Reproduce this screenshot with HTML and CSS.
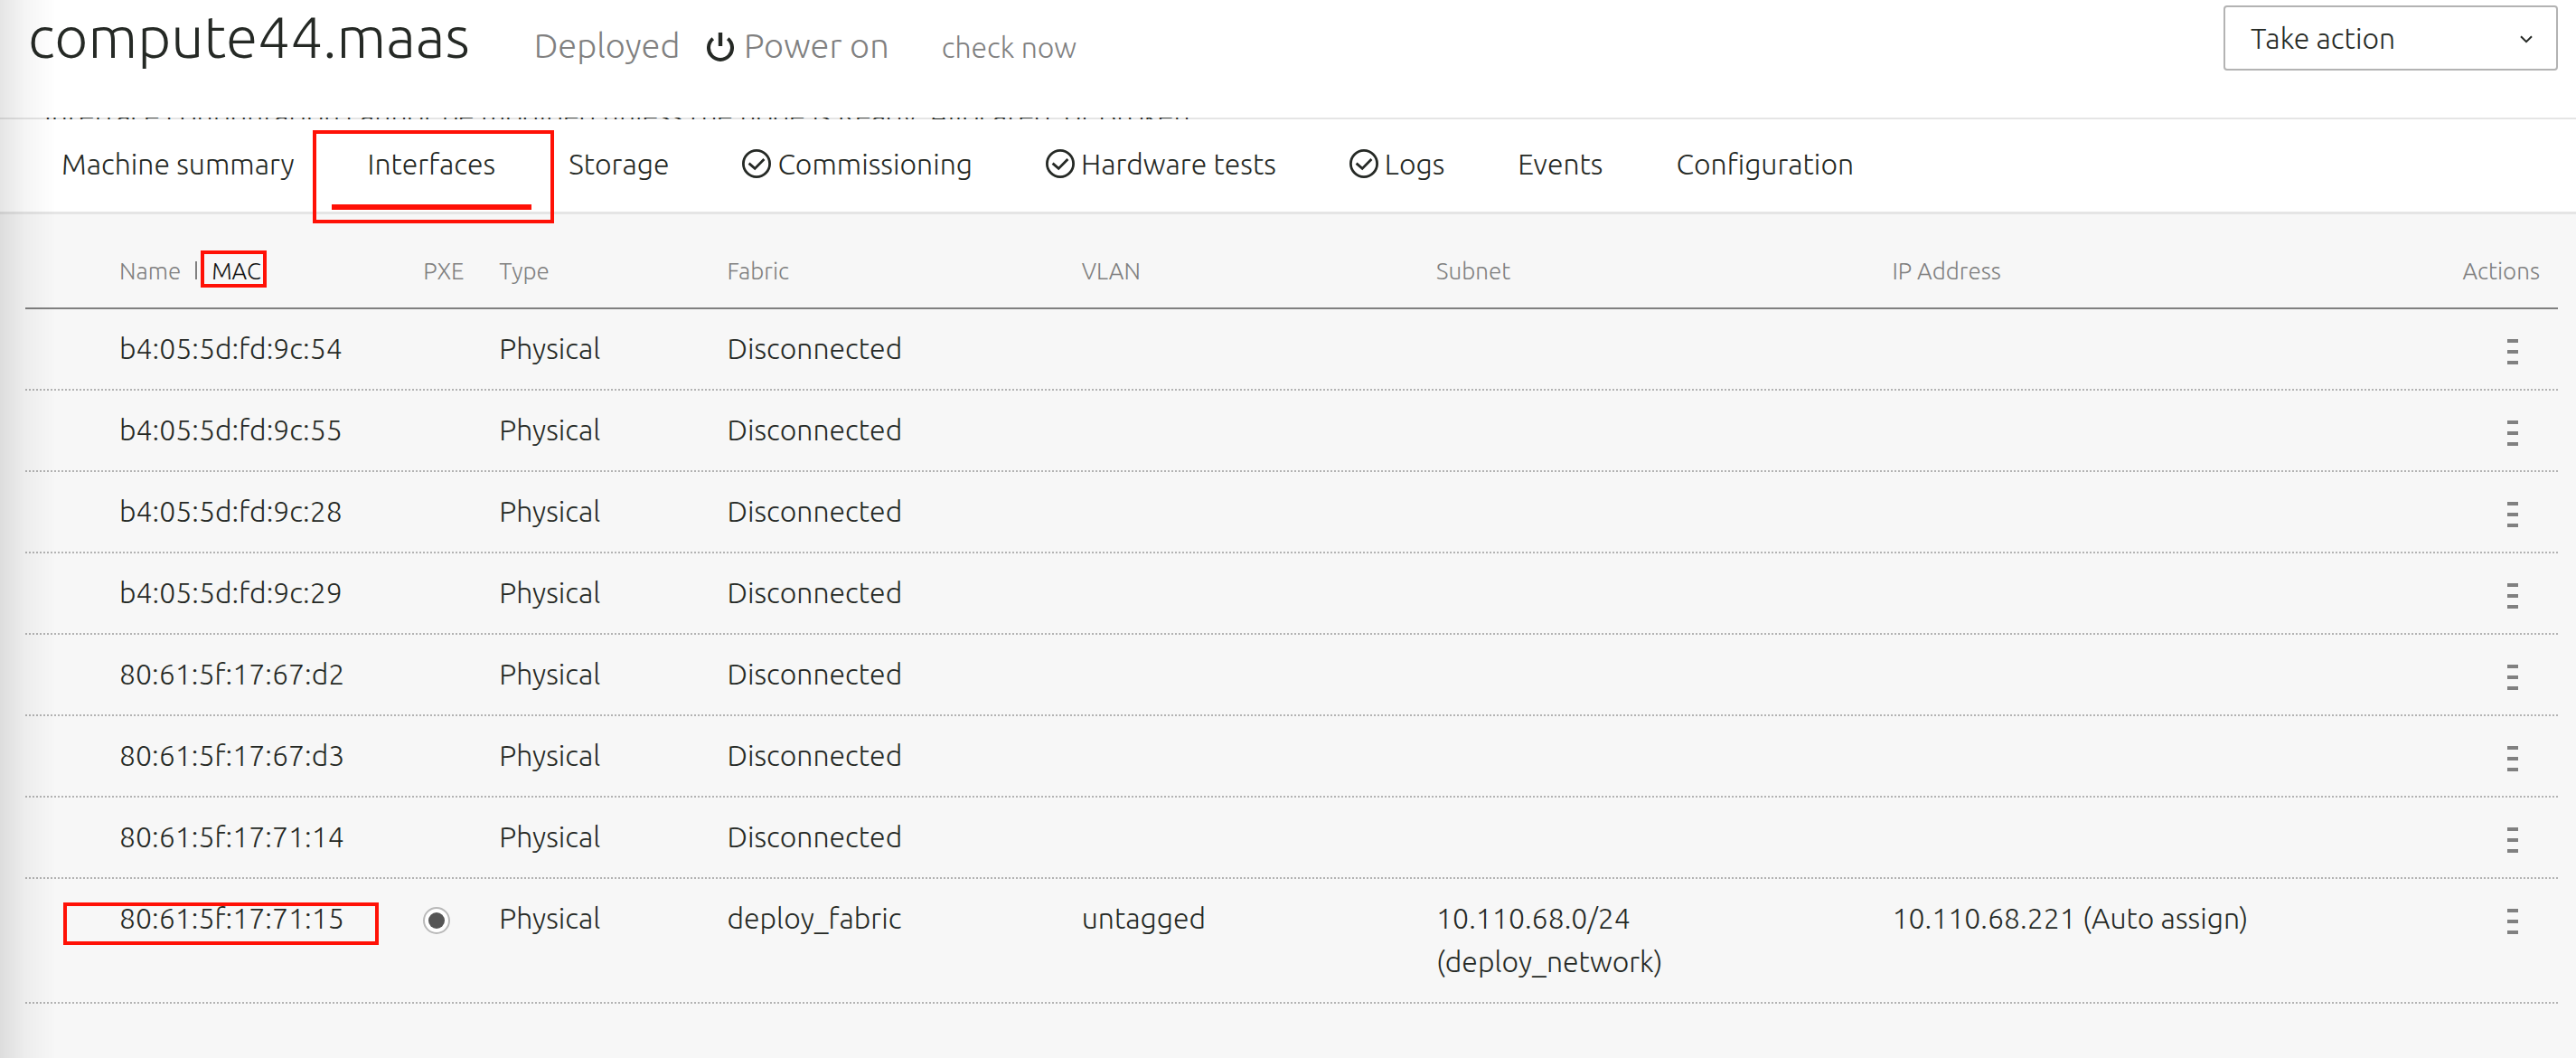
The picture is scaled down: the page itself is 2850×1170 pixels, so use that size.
FILE: index.html
```html
<!DOCTYPE html>
<html lang="en">
<head>
<meta charset="utf-8">
<meta name="viewport" content="width=device-width, initial-scale=1">
<title>compute44.maas | Interfaces</title>
<link rel="stylesheet" href="styles.css">
</head>
<body>
<svg class="sprite" aria-hidden="true">
  <symbol id="icon-success" viewBox="0 0 32 32">
    <circle cx="16" cy="16" r="14.6" fill="none" stroke="currentColor" stroke-width="2.8"/>
    <path d="M7.6 15.6 L14.2 21.4 L24.4 11" fill="none" stroke="currentColor" stroke-width="2.8"/>
  </symbol>
  <symbol id="icon-menu" viewBox="0 0 12 28">
    <path d="M0 0h12v4H0zM0 12h12v4H0zM0 24h12v4H0z" fill="currentColor"/>
  </symbol>
</svg>

<header class="header">
  <h1 class="header-title">compute44.maas</h1>
  <p class="header-status">Deployed</p>
  <p class="header-power">
    <svg class="power-icon" viewBox="0 0 30 32" aria-hidden="true">
      <path d="M6.8 6.8 A13 13 0 1 0 23.2 6.8" fill="none" stroke="currentColor" stroke-width="4"/>
      <path d="M15 0V15" stroke="currentColor" stroke-width="4.4"/>
    </svg>
    Power on
  </p>
  <a class="header-check" href="#check">check now</a>
  <div class="action">
    <select class="action-select" aria-label="Take action">
      <option>Take action</option>
    </select>
    <svg class="action-chevron" viewBox="0 0 14 9" aria-hidden="true">
      <path d="M1 1.2 L7 7.2 L13 1.2" fill="none" stroke="currentColor" stroke-width="2"/>
    </svg>
  </div>
</header>

<div class="notice">
  <p class="notice-text">Interface configuration cannot be modified unless the node is Ready, Allocated, or Broken.</p>
</div>

<nav class="tabs" aria-label="Machine">
  <a class="tab" href="#summary">Machine summary</a>
  <a class="tab tab-selected" href="#interfaces" aria-current="page">Interfaces<span class="mark mark-tab"></span></a>
  <a class="tab" href="#storage">Storage</a>
  <a class="tab" href="#commissioning"><svg class="tab-icon" aria-hidden="true"><use href="#icon-success"/></svg>Commissioning</a>
  <a class="tab" href="#tests"><svg class="tab-icon" aria-hidden="true"><use href="#icon-success"/></svg>Hardware tests</a>
  <a class="tab" href="#logs"><svg class="tab-icon" aria-hidden="true"><use href="#icon-success"/></svg>Logs</a>
  <a class="tab" href="#events">Events</a>
  <a class="tab" href="#configuration">Configuration</a>
</nav>

<main class="content">
  <table class="interfaces">
    <colgroup>
      <col class="col-name"><col class="col-pxe"><col class="col-type"><col class="col-fabric"><col class="col-vlan"><col class="col-subnet"><col class="col-ip"><col class="col-actions">
    </colgroup>
    <thead>
      <tr>
        <th scope="col"><span class="sort"><button class="sort-button" type="button">Name</button><span class="sort-divider"></span><button class="sort-button sort-active" type="button">MAC<span class="mark mark-mac"></span></button></span></th>
        <th scope="col">PXE</th>
        <th scope="col">Type</th>
        <th scope="col">Fabric</th>
        <th scope="col">VLAN</th>
        <th scope="col">Subnet</th>
        <th scope="col">IP Address</th>
        <th scope="col">Actions</th>
      </tr>
    </thead>
    <tbody>
      <tr><td>b4:05:5d:fd:9c:54</td><td></td><td>Physical</td><td>Disconnected</td><td></td><td></td><td></td><td><button class="menu" type="button" aria-label="Actions"><svg class="menu-icon"><use href="#icon-menu"/></svg></button></td></tr>
      <tr><td>b4:05:5d:fd:9c:55</td><td></td><td>Physical</td><td>Disconnected</td><td></td><td></td><td></td><td><button class="menu" type="button" aria-label="Actions"><svg class="menu-icon"><use href="#icon-menu"/></svg></button></td></tr>
      <tr><td>b4:05:5d:fd:9c:28</td><td></td><td>Physical</td><td>Disconnected</td><td></td><td></td><td></td><td><button class="menu" type="button" aria-label="Actions"><svg class="menu-icon"><use href="#icon-menu"/></svg></button></td></tr>
      <tr><td>b4:05:5d:fd:9c:29</td><td></td><td>Physical</td><td>Disconnected</td><td></td><td></td><td></td><td><button class="menu" type="button" aria-label="Actions"><svg class="menu-icon"><use href="#icon-menu"/></svg></button></td></tr>
      <tr><td>80:61:5f:17:67:d2</td><td></td><td>Physical</td><td>Disconnected</td><td></td><td></td><td></td><td><button class="menu" type="button" aria-label="Actions"><svg class="menu-icon"><use href="#icon-menu"/></svg></button></td></tr>
      <tr><td>80:61:5f:17:67:d3</td><td></td><td>Physical</td><td>Disconnected</td><td></td><td></td><td></td><td><button class="menu" type="button" aria-label="Actions"><svg class="menu-icon"><use href="#icon-menu"/></svg></button></td></tr>
      <tr><td>80:61:5f:17:71:14</td><td></td><td>Physical</td><td>Disconnected</td><td></td><td></td><td></td><td><button class="menu" type="button" aria-label="Actions"><svg class="menu-icon"><use href="#icon-menu"/></svg></button></td></tr>
      <tr><td><span class="mac">80:61:5f:17:71:15<span class="mark mark-row"></span></span></td><td><input class="pxe" type="radio" name="pxe" aria-label="PXE boot interface" checked></td><td>Physical</td><td>deploy_fabric</td><td>untagged</td><td>10.110.68.0/24<br>(deploy_network)</td><td>10.110.68.221 (Auto assign)</td><td><button class="menu" type="button" aria-label="Actions"><svg class="menu-icon"><use href="#icon-menu"/></svg></button></td></tr>
    </tbody>
  </table>
</main>
</body>
</html>
```

FILE: styles.css
```css
* {
  box-sizing: border-box;
}

body {
  margin: 0;
  min-height: 100vh;
  background: #f7f7f7;
  color: #252925;
  font-family: Ubuntu, "Open Sans", sans-serif;
  font-size: 32px;
  font-weight: 300;
  line-height: 48px;
}

body::before {
  content: "";
  position: fixed;
  z-index: 1;
  inset: 0 auto 0 0;
  width: 62px;
  background: linear-gradient(to right, rgba(0, 0, 0, 0.1), rgba(0, 0, 0, 0.04) 28px, transparent);
  pointer-events: none;
}

button,
select {
  margin: 0;
  border: 0;
  padding: 0;
  background: none;
  color: inherit;
  font: inherit;
}

a {
  color: inherit;
  text-decoration: none;
}

h1,
p {
  margin: 0;
  font-weight: 300;
}

.sprite {
  display: none;
}

.header {
  display: flex;
  align-items: baseline;
  padding: 0 20px 50px 31px;
  background: #fff;
}

.header-title {
  margin-right: 71px;
  font-size: 64px;
  line-height: 80px;
}

.header-status,
.header-power {
  margin-right: 30px;
  color: #808080;
  font-size: 38px;
}

.power-icon {
  margin-right: 2px;
  width: 30px;
  height: 32px;
  color: #252925;
  vertical-align: -4px;
}

.header-check {
  margin-left: 28px;
  color: #808080;
}

.action {
  position: relative;
  align-self: flex-start;
  margin: 6px 0 0 auto;
  width: 370px;
}

.action-select {
  display: block;
  width: 100%;
  height: 72px;
  border: 2px solid #b3b3b3;
  border-radius: 4px;
  padding: 0 60px 0 28px;
  background: #fff;
  appearance: none;
}

.action-chevron {
  position: absolute;
  top: 33px;
  right: 28px;
  width: 14px;
  height: 9px;
  pointer-events: none;
}

.notice {
  height: 2px;
  overflow: hidden;
  padding-left: 49px;
  background: #e5e5e5;
}

.notice-text {
  margin-top: -27px;
}

.tabs {
  display: flex;
  gap: 1px;
  border-bottom: 3px solid #e5e5e5;
  padding: 0 28px 2px;
  background: #fff;
}

.tab {
  position: relative;
  display: flex;
  align-items: center;
  border-bottom: 6px solid transparent;
  padding: 25px 40px 21px;
}

.tab-selected {
  border-color: #ff1106;
}

.tab-icon {
  margin-right: 7px;
  width: 32px;
  height: 32px;
}

.content {
  padding: 0 20px 56px 28px;
}

.interfaces {
  width: 100%;
  border-spacing: 0;
  table-layout: fixed;
}

.col-name { width: 15%; }
.col-pxe { width: 3%; }
.col-type { width: 9%; }
.col-fabric { width: 14%; }
.col-vlan { width: 14%; }
.col-subnet { width: 18%; }
.col-ip { width: 18%; }
.col-actions { width: 9%; }

th,
td {
  padding: 19px 0 23px 20px;
  text-align: left;
  vertical-align: top;
  white-space: nowrap;
}

th {
  border-bottom: 2px solid #808080;
  padding-top: 39px;
  padding-bottom: 16px;
  color: #808080;
  font-size: 26px;
  font-weight: 300;
}

/* One dotted rule across the whole row, unbroken at the cell edges */
tbody tr {
  background: repeating-linear-gradient(to right, #b3b3b3 0 2px, transparent 2px 4px) bottom / 100% 2px no-repeat;
}

th:first-child,
td:first-child {
  padding-left: 104px;
}

th:last-child {
  padding-right: 20px;
  text-align: right;
}

.sort {
  display: flex;
  align-items: baseline;
  gap: 16px;
}

.sort-button {
  position: relative;
}

.sort-active {
  color: #111;
}

.sort-divider {
  width: 2px;
  height: 20px;
  background: #808080;
}

.mac {
  position: relative;
}

.pxe {
  display: grid;
  place-items: center;
  margin: 12px 0 0;
  width: 30px;
  height: 30px;
  border: 2px solid #b9b9b9;
  border-radius: 50%;
  background: #fff;
  appearance: none;
}

.pxe:checked::before {
  content: "";
  width: 18px;
  height: 18px;
  border-radius: 50%;
  background: #555;
}

.menu {
  display: block;
  margin: 14px 44px 0 auto;
  color: #808080;
}

.menu-icon {
  display: block;
  width: 12px;
  height: 28px;
}

/* Red annotation frames */
.mark {
  position: absolute;
  border: 4px solid #ff1106;
  pointer-events: none;
}

.mark-tab {
  inset: 12px -25px -21px -21px;
}

.mark-mac {
  inset: 1px -6px 6px -12px;
}

.mark-row {
  inset: 1px -38px -12px -62px;
}
```
